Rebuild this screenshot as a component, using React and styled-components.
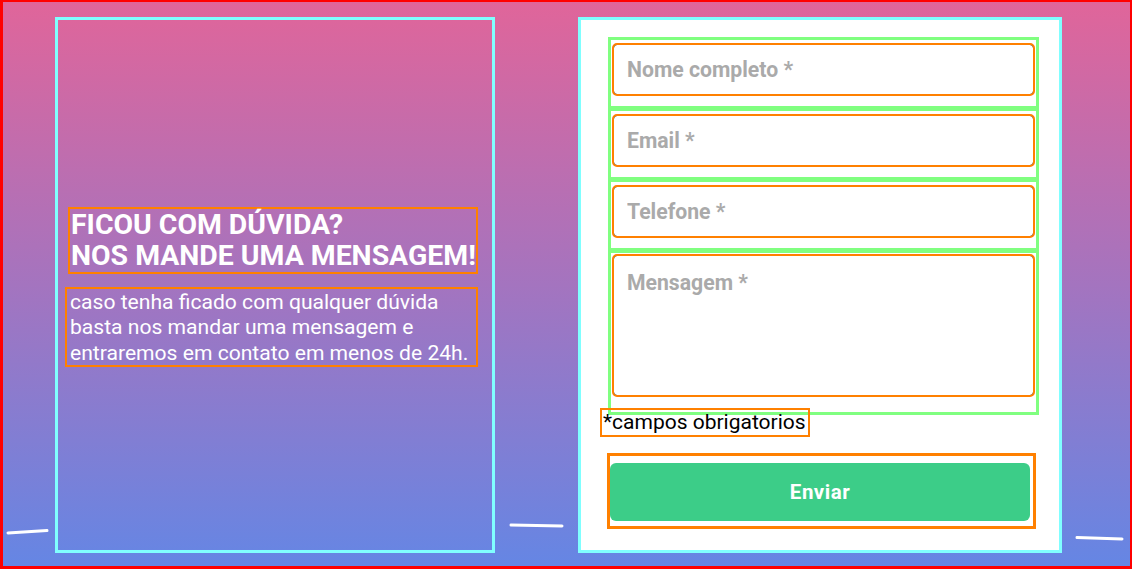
import React from 'react'
import styled, { createGlobalStyle } from 'styled-components'

const GlobalStyle = createGlobalStyle`
  * { box-sizing: border-box; }
  body {
    margin: 0;
    font-family: Roboto, "Liberation Sans", sans-serif;
  }
`

const Page = styled.div`
  position: relative;
  width: 1132px;
  height: 569px;
  border-style: solid;
  border-color: #ff0000;
  border-width: 2px 2px 3px 3px;
  background: linear-gradient(to bottom, #e0659a 0%, #a474bf 50%, #6586e4 100%);
  display: flex;
  align-items: flex-start;
  padding: 15px 0 0 52px;
  gap: 83px;
  overflow: hidden;
`

const InfoColumn = styled.section`
  width: 440px;
  height: 536px;
  border: 3px solid #80ffff;
  display: flex;
  flex-direction: column;
  justify-content: center;
  padding: 4px 14px 0 7px;
  color: #fff;
`

const Title = styled.h1`
  margin: 0 0 13px 3px;
  border: 2px solid #ff8000;
  font-size: 28.4px;
  font-weight: 700;
  line-height: 31.5px;
  padding-left: 1px;
  white-space: nowrap;
`

const Text = styled.p`
  margin: 0;
  border: 2px solid #ff8000;
  font-size: 21.1px;
  line-height: 25.5px;
  padding-left: 3px;
`

const Card = styled.section`
  width: 484px;
  height: 536px;
  background: #fff;
  border: 3px solid #80ffff;
  padding: 17px 0 0 19px;
`

const Form = styled.form`
  display: flex;
  flex-direction: column;
  align-items: flex-start;
`

const Group = styled.div`
  width: 431px;
  margin: 0 0 -1px 8px;
  border: 3px solid #80ff80;
  padding: ${p => (p.$tall ? '2px 2px 16px 2px' : '4px 2px 11px 2px')};
`

const fieldStyles = `
  display: block;
  width: 421px;
  border: 1px solid #2b2b2b;
  border-radius: 4px;
  outline: 2px solid #ff8000;
  outline-offset: -1px;
  background: #fff;
  font-family: Roboto, "Liberation Sans", sans-serif;
  font-size: 21.2px;
  font-weight: 700;
  padding: 0 13px;
  color: #333;
  &::placeholder { color: #aaaaaa; }
`

const Input = styled.input`
  ${fieldStyles}
  height: 51px;
`

const TextArea = styled.textarea`
  ${fieldStyles}
  height: 141px;
  padding-top: 14px;
  resize: none;
`

const Note = styled.span`
  margin-top: -6px;
  border: 2px solid #ff8000;
  font-size: 21px;
  line-height: 25px;
  padding: 0 2px 0 1px;
  color: #000;
`

const ButtonBox = styled.div`
  width: 429px;
  margin: 16px 0 0 7px;
  border: 3px solid #ff8000;
  padding: 7px 3px 5px 0;
`

const SendButton = styled.button`
  display: block;
  width: 420px;
  height: 58px;
  border: none;
  border-radius: 6px;
  background: #3ccd88;
  color: #fff;
  font-family: Roboto, "Liberation Sans", sans-serif;
  font-size: 20.5px;
  font-weight: 700;
  letter-spacing: 0.5px;
`

const Dashes = styled.svg`
  position: absolute;
  left: -3px;
  top: -2px;
  pointer-events: none;
`

export default function App() {
  return (
    <>
      <GlobalStyle />
      <Page>
        <InfoColumn>
          <Title>
            FICOU COM DÚVIDA?
            <br />
            NOS MANDE UMA MENSAGEM!
          </Title>
          <Text>
            caso tenha ficado com qualquer dúvida basta nos mandar uma mensagem e entraremos em contato em menos de 24h.
          </Text>
        </InfoColumn>
        <Card>
          <Form onSubmit={e => e.preventDefault()}>
            <Group>
              <Input placeholder="Nome completo *" />
            </Group>
            <Group>
              <Input placeholder="Email *" />
            </Group>
            <Group>
              <Input placeholder="Telefone *" />
            </Group>
            <Group $tall>
              <TextArea placeholder="Mensagem *" />
            </Group>
            <Note>*campos obrigatorios</Note>
            <ButtonBox>
              <SendButton type="submit">Enviar</SendButton>
            </ButtonBox>
          </Form>
        </Card>
        <Dashes width="1132" height="569">
          <g stroke="#fff" strokeWidth="3" strokeLinecap="round">
            <line x1="8" y1="533" x2="47" y2="530.5" />
            <line x1="511" y1="525" x2="562" y2="526" />
            <line x1="1077" y1="537.5" x2="1122" y2="539" />
          </g>
        </Dashes>
      </Page>
    </>
  )
}
